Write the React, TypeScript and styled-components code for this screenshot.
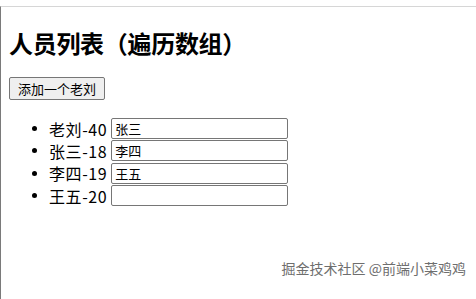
import React, { useState } from 'react'
import styled, { createGlobalStyle } from 'styled-components'

const GlobalStyle = createGlobalStyle`
  html, body {
    margin: 0;
    padding: 0;
    background: #fff;
  }
  body {
    font-family: 'Noto Sans CJK SC', 'Noto Sans', sans-serif;
    color: #000;
  }
`

const Page = styled.div`
  position: relative;
  width: 476px;
  height: 299px;
  padding-top: 6px;
  box-sizing: border-box;
  overflow: hidden;
`

const Frame = styled.div`
  height: 100%;
  border-top: 1px solid #d6d6d6;
  border-left: 1px solid #7a7a7a;
  padding: 0 8px;
  box-sizing: border-box;
`

const Title = styled.h1`
  margin: 19px 0 0;
  font-size: 24px;
  line-height: 34px;
  font-weight: 700;
  letter-spacing: -0.3px;
`

const AddButton = styled.button`
  margin-top: 17px;
  height: 23px;
  padding: 0 8px;
  font-family: 'Noto Sans CJK SC', sans-serif;
  font-size: 13px;
  line-height: 19px;
  color: #000;
  background: #efefef;
  border: 1px solid #767676;
  border-radius: 2px;
`

const List = styled.ul`
  margin: 15px 0 0;
  padding-left: 40px;
`

const Item = styled.li`
  font-size: 16px;
  line-height: 22.3px;
  height: 22.3px;

  &::marker {
    font-size: 14px;
  }
`

const Label = styled.span`
  display: inline-block;
  vertical-align: middle;
  margin-right: 4px;
  line-height: 20px;
  letter-spacing: 0.6px;
`

const NameInput = styled.input`
  vertical-align: middle;
  width: 177px;
  height: 21px;
  box-sizing: border-box;
  padding: 1px 3px;
  font-family: 'Noto Sans CJK SC', sans-serif;
  font-size: 13px;
  border: 1px solid #767676;
  border-radius: 2px;
  outline: none;
`

const Watermark = styled.div`
  position: absolute;
  right: 10px;
  bottom: 21px;
  font-size: 14px;
  color: #6e6e6e;
  text-shadow: 0 0 1px #fff, 0 0 2px #fff;
`

interface Person {
  id: string
  name: string
  age: number
  value: string
}

const initial: Person[] = [
  { id: '1', name: '老刘', age: 40, value: '张三' },
  { id: '2', name: '张三', age: 18, value: '李四' },
  { id: '3', name: '李四', age: 19, value: '王五' },
  { id: '4', name: '王五', age: 20, value: '' },
]

export default function App() {
  const [people, setPeople] = useState(initial)

  const addOne = () => {
    setPeople([{ id: String(Date.now()), name: '老刘', age: 40, value: '' }, ...people])
  }

  return (
    <>
      <GlobalStyle />
      <Page>
        <Frame>
          <Title>人员列表（遍历数组）</Title>
          <AddButton onClick={addOne}>添加一个老刘</AddButton>
          <List>
            {people.map(p => (
              <Item key={p.id}>
                <Label>
                  {p.name}-{p.age}
                </Label>
                <NameInput defaultValue={p.value} />
              </Item>
            ))}
          </List>
        </Frame>
        <Watermark>掘金技术社区 @前端小菜鸡鸡</Watermark>
      </Page>
    </>
  )
}
